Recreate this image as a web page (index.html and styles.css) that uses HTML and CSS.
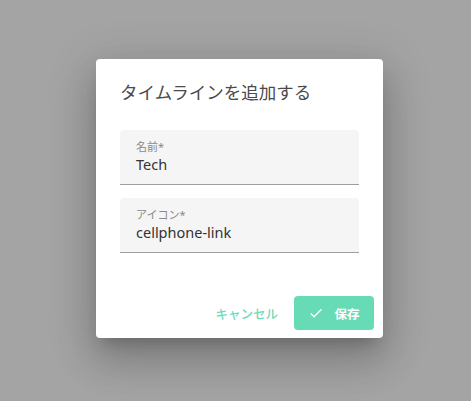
FILE: index.html
```html
<!DOCTYPE html>
<html lang="ja">
  <head>
    <meta charset="UTF-8" />
    <title>タイムラインを追加する</title>
    <link rel="stylesheet" href="styles.css">
  </head>
  <body>
    <div class="dialog">
      <h2 class="title">タイムラインを追加する</h2>
      <div class="fields">
        <label class="field">
          <span class="label">名前*</span>
          <span class="value">Tech</span>
        </label>
        <label class="field">
          <span class="label">アイコン*</span>
          <span class="value">cellphone-link</span>
        </label>
      </div>
      <div class="actions">
        <button class="btn cancel">キャンセル</button>
        <button class="btn save">
          <svg width="16" height="16" viewBox="0 0 24 24">
            <path d="M21 7L9 19l-5.5-5.5 1.41-1.41L9 16.17 19.59 5.59z" fill="#fff" />
          </svg>
          保存
        </button>
      </div>
    </div>
  </body>
</html>
```

FILE: styles.css
```css
html,
body {
  margin: 0;
  height: 100%;
}

body {
  background: #a4a4a4;
  font-family: "Noto Sans", "Noto Sans CJK JP", sans-serif;
  padding: 59px 0 0 96px;
  box-sizing: border-box;
}

.dialog {
  width: 287px;
  height: 279px;
  box-sizing: border-box;
  background: #fff;
  border-radius: 4px;
  box-shadow: 0 11px 15px -7px rgba(0, 0, 0, 0.2),
    0 24px 38px 3px rgba(0, 0, 0, 0.14), 0 9px 46px 8px rgba(0, 0, 0, 0.12);
  padding: 19px 24px 0;
  display: flex;
  flex-direction: column;
}

.title {
  margin: 0;
  font-family: "Noto Sans CJK JP", sans-serif;
  font-weight: 400;
  font-size: 17.5px;
  line-height: 27px;
  color: #4a4a4a;
}

.fields {
  margin-top: 25px;
  display: flex;
  flex-direction: column;
  gap: 13px;
}

.field {
  display: flex;
  flex-direction: column;
  height: 55px;
  box-sizing: border-box;
  background: #f5f5f5;
  border-bottom: 1px solid #9e9e9e;
  border-radius: 4px 4px 0 0;
  padding: 9px 16px 0;
}

.label {
  font-size: 11px;
  line-height: 15px;
  color: #8a8a8a;
}

.value {
  font-size: 14.5px;
  line-height: 21px;
  color: #333;
}

.actions {
  margin-top: auto;
  margin-bottom: 8px;
  margin-right: -15px;
  display: flex;
  justify-content: flex-end;
  align-items: center;
  gap: 16px;
}

.btn {
  font-family: "Noto Sans CJK JP", sans-serif;
  font-size: 12.5px;
  font-weight: 500;
  border: none;
  border-radius: 4px;
  height: 34px;
  cursor: pointer;
}

.cancel {
  background: none;
  color: #6adbb8;
  padding: 0;
}

.save {
  width: 80px;
  background: #66dbb6;
  color: #fff;
  display: flex;
  align-items: center;
  justify-content: center;
  gap: 10px;
  padding: 0;
  font-weight: 700;
}
```
